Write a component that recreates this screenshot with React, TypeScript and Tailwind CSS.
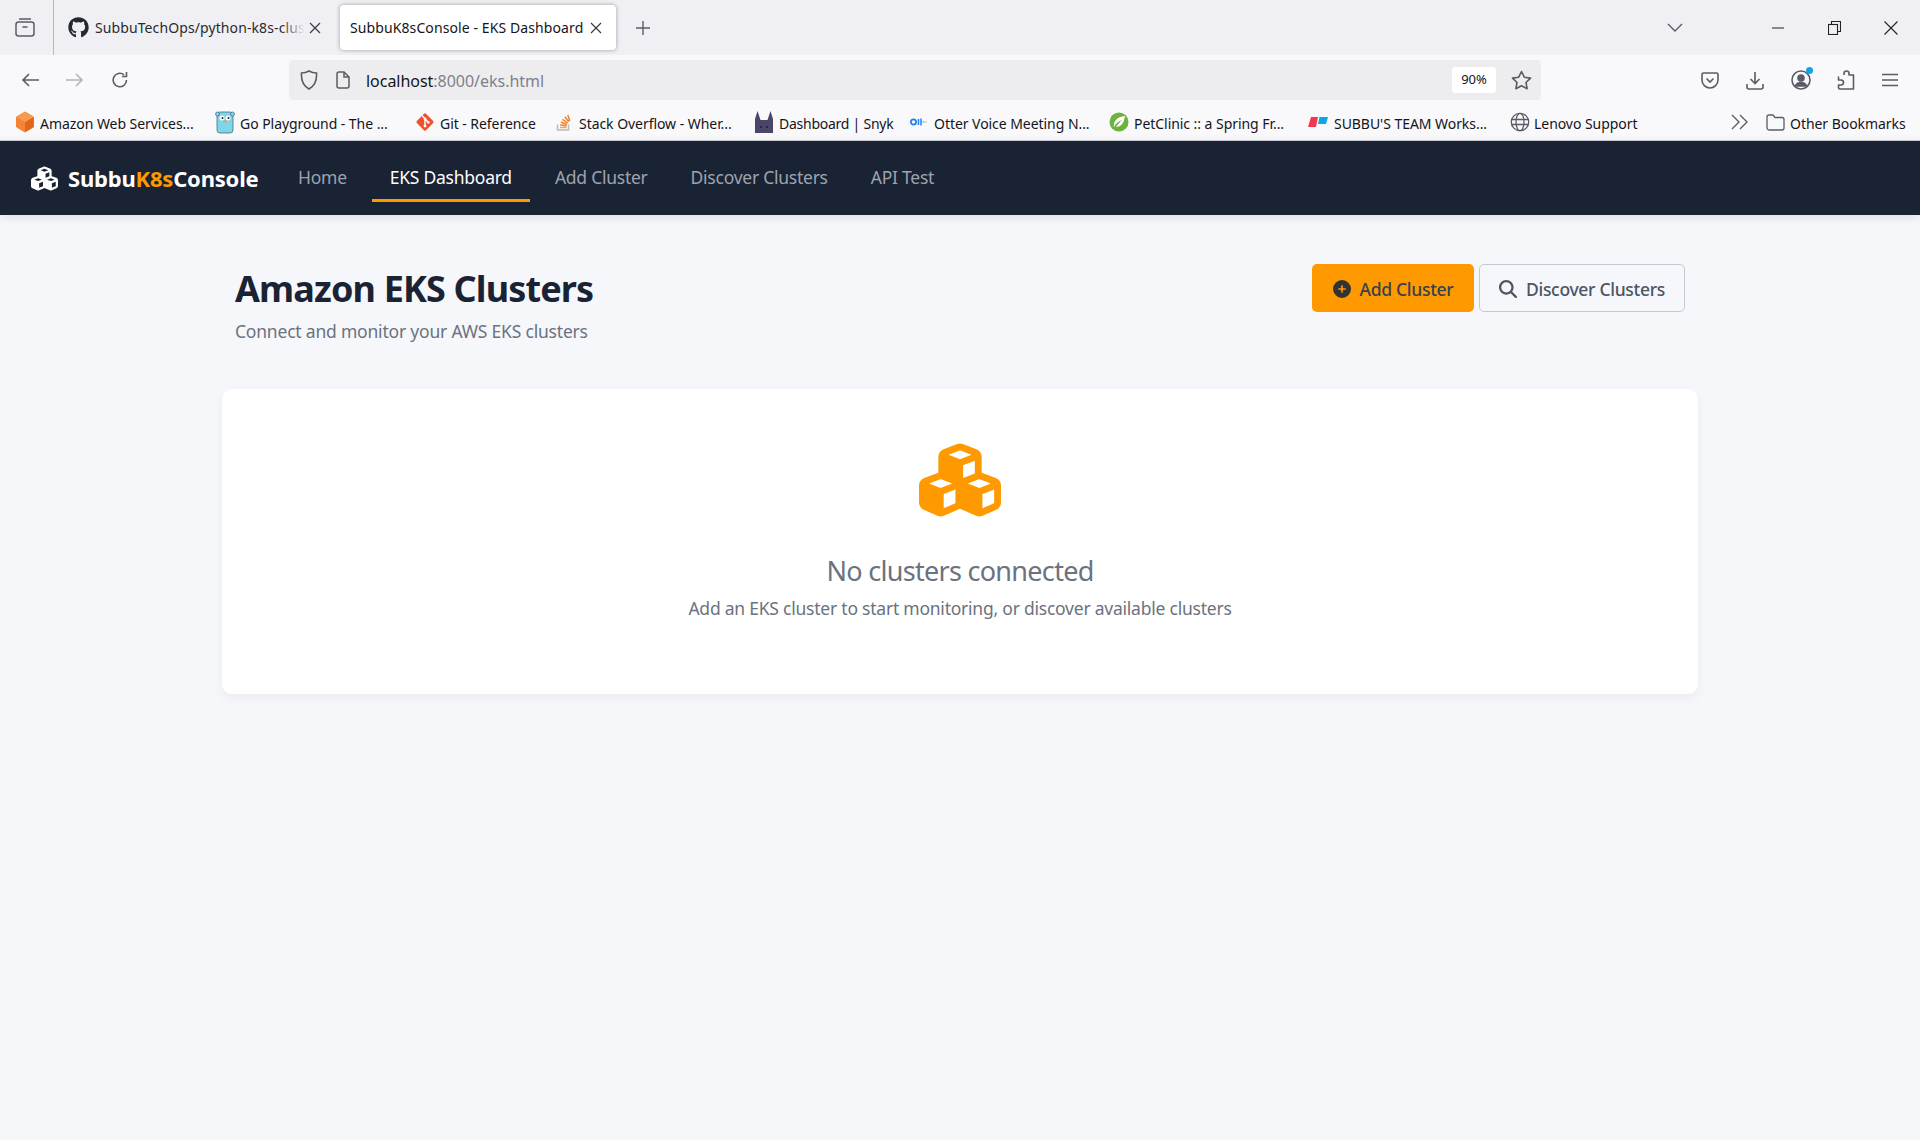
import { FaGithub } from 'react-icons/fa';
import { FaCirclePlus, FaCubes, FaMagnifyingGlass } from 'react-icons/fa6';

const font = "font-['Noto_Sans','Open_Sans',sans-serif]";

const AmazonIcon = () => (
  <svg width="20" height="22" viewBox="0 0 20 22">
    <path d="M10 1l8.500 5v10L10 21l-8.500-5V6z" fill="#f58536" stroke="#f58536" strokeLinejoin="round" />
    <path d="M10 11l8.500-5v10L10 21z" fill="#e0661f" />
    <path d="M10 1l8.500 5L10 11 1.500 6z" fill="#fa9a4c" />
  </svg>
);

const GoIcon = () => (
  <svg width="20" height="24" viewBox="0 0 20 24">
    <rect x="2" y="2" width="16" height="21" rx="3" fill="#7fd5ea" stroke="#4a6b78" strokeWidth="0.8" />
    <circle cx="2.500" cy="4" r="2" fill="#7fd5ea" stroke="#4a6b78" strokeWidth="0.7" />
    <circle cx="17.500" cy="4" r="2" fill="#7fd5ea" stroke="#4a6b78" strokeWidth="0.7" />
    <circle cx="7" cy="8" r="2.500" fill="#fff" />
    <circle cx="13" cy="8" r="2.500" fill="#fff" />
    <circle cx="7.500" cy="8" r="1" fill="#222" />
    <circle cx="13.500" cy="8" r="1" fill="#222" />
    <ellipse cx="10" cy="11.500" rx="2" ry="1.300" fill="#d9a27a" />
  </svg>
);

const GitIcon = () => (
  <svg width="20" height="20" viewBox="0 0 20 20">
    <rect x="3.500" y="3.500" width="13" height="13" rx="1.500" transform="rotate(45 10 10)" fill="#f0502e" />
    <path d="M7 3.500l6 6.500M10 7v7" stroke="#fff" strokeWidth="1.400" fill="none" />
    <circle cx="10" cy="7" r="1.400" fill="#fff" />
    <circle cx="10" cy="14" r="1.400" fill="#fff" />
    <circle cx="13.300" cy="10.300" r="1.400" fill="#fff" />
  </svg>
);

const StackIcon = () => (
  <svg width="18" height="20" viewBox="0 0 18 20" fill="none">
    <path d="M2.500 12.500V18h11v-5.500" stroke="#bcbbbb" strokeWidth="1.500" />
    <path d="M5 15.500h6.500" stroke="#f2a45c" strokeWidth="1.500" />
    <path d="M5.200 12.800l6.300 1.200M6 10l6 2.500M7.500 7.300l5.200 3.700M9.800 4.800l4 5M12.800 3l2 6" stroke="#f48024" strokeWidth="1.500" />
  </svg>
);

const SnykIcon = () => (
  <svg width="20" height="24" viewBox="0 0 20 24">
    <path d="M1 23V9l2.500-8 3 9h7l3-9L19 9v14z" fill="#4b4668" />
    <circle cx="7" cy="17" r="1" fill="#221f33" />
    <circle cx="13" cy="17" r="1" fill="#221f33" />
  </svg>
);

const OtterIcon = () => (
  <svg width="18" height="12" viewBox="0 0 18 12" fill="none">
    <circle cx="3.500" cy="6" r="2.600" stroke="#1d82f5" strokeWidth="1.800" />
    <path d="M8.500 3v6M11 2.500v7" stroke="#1d82f5" strokeWidth="1.500" />
    <path d="M13.500 5v2M16 5.500v1" stroke="#7db8f7" strokeWidth="1.500" />
  </svg>
);

const SpringIcon = () => (
  <svg width="20" height="22" viewBox="0 0 20 22">
    <circle cx="10" cy="11" r="9.500" fill="#6cb33e" />
    <path d="M5 16c-1-6 3-10 11-11-1 7-4 11-9 11 2-3 4-5 6-7-3 1-6 3-8 7z" fill="#fff" />
  </svg>
);

const TeamIcon = () => (
  <svg width="20" height="10" viewBox="0 0 20 10">
    <path d="M3 0h7L8 10H0z" fill="#f0384f" />
    <path d="M11.500 0H20l-2 7h-8z" fill="#0ea5e9" />
  </svg>
);

const GlobeIcon = () => (
  <svg width="20" height="20" viewBox="0 0 20 20" fill="none" stroke="#5b5b66" strokeWidth="1.300">
    <circle cx="10" cy="10" r="8.700" />
    <ellipse cx="10" cy="10" rx="4" ry="8.700" />
    <path d="M1.500 7.500h17M1.500 12.500h17" />
  </svg>
);

const bookmarks = [
  { icon: <AmazonIcon />, label: 'Amazon Web Services...', box: 'w-[215px] pl-[15px] gap-[5px]' },
  { icon: <GoIcon />, label: 'Go Playground - The ...', box: 'w-[200px] gap-[5px]' },
  { icon: <GitIcon />, label: 'Git - Reference', box: 'w-[140px] gap-[5px]' },
  { icon: <StackIcon />, label: 'Stack Overflow - Wher...', box: 'w-[199px] gap-[6px]' },
  { icon: <SnykIcon />, label: 'Dashboard | Snyk', box: 'w-[156px] gap-[5px] tracking-[-0.25px]' },
  { icon: <OtterIcon />, label: 'Otter Voice Meeting N...', box: 'w-[199px] gap-[6px]' },
  { icon: <SpringIcon />, label: 'PetClinic :: a Spring Fr...', box: 'w-[199px] gap-[5px]' },
  { icon: <TeamIcon />, label: "SUBBU'S TEAM Works...", box: 'w-[202px] gap-[6px]' },
  { icon: <GlobeIcon />, label: 'Lenovo Support', box: 'w-[130px] gap-[4px]' },
];

const navLinks = [
  { label: 'Home', active: false },
  { label: 'EKS Dashboard', active: true },
  { label: 'Add Cluster', active: false },
  { label: 'Discover Clusters', active: false },
  { label: 'API Test', active: false },
];

const TabStrip = () => (
  <div className="flex h-[55px] items-center bg-[#f0f0f4] text-[#15141a]">
    <div className="flex h-full w-[54px] shrink-0 items-center border-r border-[#b8b8bd] pl-[15px]">
      <svg width="20" height="20" viewBox="0 0 20 20" fill="none" stroke="#5b5b66" strokeWidth="1.500">
        <rect x="1" y="4" width="18" height="14" rx="2.500" />
        <path d="M4 1h12M7.500 9h5" />
      </svg>
    </div>
    <div className="ml-[14px] flex w-[272px] shrink-0 items-center">
      <FaGithub className="shrink-0 text-[21px] text-[#24292e]" />
      <span className="relative ml-[6px] w-[210px] overflow-hidden whitespace-nowrap text-[14px] tracking-[0.1px] text-[#2a2a2e]">
        SubbuTechOps/python-k8s-cluster
        <span className="absolute inset-y-0 right-0 w-[24px] bg-gradient-to-r from-transparent to-[#f0f0f4]" />
      </span>
      <svg className="ml-[4px] shrink-0" width="12" height="12" viewBox="0 0 12 12" stroke="#3a3a40" strokeWidth="1.200"><path d="M1 1l10 10M11 1L1 11" /></svg>
    </div>
    <div className="flex h-[45px] w-[276px] shrink-0 items-center rounded-[4px] bg-white pl-[10px] shadow-[0_0_4px_rgba(0,0,0,0.35)]">
      <span className="w-[240px] whitespace-nowrap text-[14px] tracking-[0.1px]">SubbuK8sConsole - EKS Dashboard</span>
      <svg className="shrink-0" width="12" height="12" viewBox="0 0 12 12" stroke="#3a3a40" strokeWidth="1.200"><path d="M1 1l10 10M11 1L1 11" /></svg>
    </div>
    <svg className="ml-[19px] shrink-0" width="16" height="16" viewBox="0 0 16 16" stroke="#5b5b66" strokeWidth="1.400"><path d="M8 1v14M1 8h14" /></svg>
    <div className="flex-1" />
    <svg className="mr-[89px] shrink-0" width="16" height="10" viewBox="0 0 16 10" fill="none" stroke="#5b5b66" strokeWidth="1.400"><path d="M1 1l7 7 7-7" /></svg>
    <svg className="mr-[44px] shrink-0" width="12" height="2" viewBox="0 0 12 2" stroke="#222"><path d="M0 1h12" /></svg>
    <svg className="mr-[43px] shrink-0" width="13" height="14" viewBox="0 0 13 14" fill="none" stroke="#222" strokeWidth="1.100"><rect x="0.500" y="3.500" width="9" height="10" /><path d="M3.500 3.500v-3h9v10h-3" /></svg>
    <svg className="mr-[22px] shrink-0" width="14" height="14" viewBox="0 0 14 14" stroke="#222" strokeWidth="1.100"><path d="M0.500 0.500l13 13M13.500 0.500l-13 13" /></svg>
  </div>
);

const Toolbar = () => (
  <div className="flex h-[45px] items-center bg-[#f9f9fb]">
    <div className="mt-[5px] flex w-[289px] shrink-0 items-center pl-[21px]">
      <svg width="18" height="16" viewBox="0 0 18 16" fill="none" stroke="#5b5b66" strokeWidth="1.600"><path d="M18 8H2M8 2L2 8l6 6" /></svg>
      <svg className="ml-[27px]" width="18" height="16" viewBox="0 0 18 16" fill="none" stroke="#b3b3b8" strokeWidth="1.600"><path d="M0 8h16M10 2l6 6-6 6" /></svg>
      <svg className="ml-[27px]" width="18" height="18" viewBox="0 0 18 18" fill="none" stroke="#5b5b66" strokeWidth="1.600"><path d="M15.500 9A6.700 6.700 0 1 1 13 3.800" /><path d="M15.500 1v4.500H11" /></svg>
    </div>
    <div className="mt-[5px] flex h-[40px] w-[1252px] shrink-0 items-center rounded-[4px] bg-[#ededf0] pl-[11px]">
      <svg width="18" height="20" viewBox="0 0 18 20" fill="none" stroke="#5b5b66" strokeWidth="1.600"><path d="M9 1c2.500 1.500 5 2 7.500 2 .5 7-2 13-7.500 16C3.500 16 1 10 1.500 3 4 3 6.500 2.500 9 1z" /></svg>
      <svg className="ml-[18px]" width="14" height="18" viewBox="0 0 14 18" fill="none" stroke="#5b5b66" strokeWidth="1.500"><path d="M1 3a2 2 0 0 1 2-2h5l5 5v9a2 2 0 0 1-2 2H3a2 2 0 0 1-2-2z" /><path d="M8 1v5h5" /></svg>
      <span className="ml-[16px] pt-[2px] text-[16px] tracking-[-0.03px] text-[#15141a]">localhost<span className="text-[#80808a]">:8000/eks.html</span></span>
      <div className="flex-1" />
      <div className="flex h-[26px] w-[44px] items-center justify-center rounded-[3px] bg-white text-[13px] text-[#15141a]">90%</div>
      <svg className="ml-[15px] mr-[9px]" width="21" height="20" viewBox="0 0 21 20" fill="none" stroke="#5b5b66" strokeWidth="1.600" strokeLinejoin="round"><path d="M10.500 1.500l2.800 5.700 6.200.9-4.500 4.400 1.100 6.200-5.600-3-5.600 3 1.100-6.200L1.500 8.100l6.200-.9z" /></svg>
    </div>
    <div className="relative mt-[5px] flex flex-1 items-center pl-[160px]">
      <svg width="18" height="18" viewBox="0 0 18 18" fill="none" stroke="#5b5b66" strokeWidth="1.600"><path d="M1 3.500A1.500 1.500 0 0 1 2.500 2h13A1.500 1.500 0 0 1 17 3.500V9a8 8 0 0 1-16 0z" /><path d="M5.500 7.500L9 11l3.500-3.500" /></svg>
      <svg className="ml-[27px]" width="18" height="19" viewBox="0 0 18 19" fill="none" stroke="#5b5b66" strokeWidth="1.600"><path d="M9 1v11M4.500 8L9 12.500 13.500 8M1 13v3a2 2 0 0 0 2 2h12a2 2 0 0 0 2-2v-3" /></svg>
      <div className="relative ml-[27px]">
        <svg width="20" height="20" viewBox="0 0 20 20" fill="none" stroke="#5b5b66" strokeWidth="1.600"><circle cx="10" cy="10" r="9" /><circle cx="10" cy="8" r="3" fill="#5b5b66" /><path d="M4.500 16c1-3 3-3.500 5.500-3.500s4.500.5 5.500 3.500z" fill="#5b5b66" /></svg>
        <span className="absolute -right-[2px] -top-[3px] h-[7px] w-[7px] rounded-full bg-[#0ea5e9]" />
      </div>
      <svg className="ml-[26px]" width="18" height="20" viewBox="0 0 18 20" fill="none" stroke="#5b5b66" strokeWidth="1.600" strokeLinejoin="round"><path d="M7 5V3.500a2.500 2.500 0 0 1 5 0V5h4.500v14H3a1.500 1.500 0 0 1-1.500-1.500V15H4a2 2 0 0 0 0-5H1.500V6.500" /></svg>
      <svg className="ml-[27px]" width="16" height="14" viewBox="0 0 16 14" stroke="#5b5b66" strokeWidth="1.600"><path d="M0 1.500h16M0 7h16M0 12.500h16" /></svg>
    </div>
  </div>
);

const BookmarksBar = () => (
  <div className="flex h-[41px] items-center border-b border-[#cfcfd8] bg-[#f9f9fb] pt-[4px] text-[14px] tracking-[-0.05px] text-[#15141a]">
    {bookmarks.map((b) => (
      <div key={b.label} className={`flex shrink-0 items-center whitespace-nowrap ${b.box}`}>
        {b.icon}
        <span className="pt-[2px]">{b.label}</span>
      </div>
    ))}
    <svg className="ml-[91px] shrink-0" width="17" height="16" viewBox="0 0 17 16" fill="none" stroke="#5b5b66" strokeWidth="1.400"><path d="M1 1l7 7-7 7M9 1l7 7-7 7" /></svg>
    <svg className="ml-[18px] shrink-0" width="19" height="17" viewBox="0 0 19 17" fill="none" stroke="#5b5b66" strokeWidth="1.300"><path d="M1 3a2 2 0 0 1 2-2h4l2 2.500h7a2 2 0 0 1 2 2V14a2 2 0 0 1-2 2H3a2 2 0 0 1-2-2z" /></svg>
    <span className="ml-[5px] whitespace-nowrap pt-[2px]">Other Bookmarks</span>
  </div>
);

const NavBar = () => (
  <nav className="relative flex h-[74px] items-center bg-[#1a2333] pl-[31px] shadow-[0_2px_10px_rgba(0,0,0,0.1)]">
    <FaCubes className="shrink-0 text-[27px] text-white" />
    <span className="ml-[10px] w-[212px] shrink-0 text-[22px] font-bold tracking-[-0.2px] text-white">
      Subbu<span className="text-[#ff9900]">K8s</span>Console
    </span>
    <div className="flex h-full gap-[7px]">
      {navLinks.map((link) => (
        <div
          key={link.label}
          className={`mb-[13px] mt-[11px] flex items-center border-b-[3px] px-[18px] pt-[4px] text-[17.500px] tracking-[-0.25px] ${
            link.active ? 'border-[#ff9900] text-white' : 'border-transparent text-[#9ca3af]'
          }`}
        >
          {link.label}
        </div>
      ))}
    </div>
  </nav>
);

export default function App() {
  return (
    <div className={`h-[1140px] overflow-hidden bg-[#f5f7fb] ${font}`}>
      <TabStrip />
      <Toolbar />
      <BookmarksBar />
      <NavBar />
      <main className="mx-auto w-[1476px] pt-[49px]">
        <div className="flex items-start justify-between px-[13px]">
          <div>
            <h1 className="pt-[2px] text-[36px] font-bold leading-[46px] tracking-[-0.85px] text-[#1a2333]">Amazon EKS Clusters</h1>
            <p className="mt-[7px] text-[17.500px] leading-[24px] tracking-[-0.2px] text-[#6b7280]">Connect and monitor your AWS EKS clusters</p>
          </div>
          <div className="flex gap-[5px]">
            <button className="flex h-[48px] w-[162px] items-center justify-center gap-[9px] rounded-[5px] bg-[#ff9900] pt-[2px] text-[17.500px] font-medium tracking-[-0.3px] text-[#374151]">
              <FaCirclePlus className="text-[18px] text-[#333]" />
              Add Cluster
            </button>
            <button className="flex h-[48px] w-[206px] items-center justify-center gap-[9px] rounded-[5px] border border-[#c8c9ce] pt-[2px] text-[17.500px] font-medium tracking-[-0.3px] text-[#4b5563]">
              <FaMagnifyingGlass className="text-[18px]" />
              Discover Clusters
            </button>
          </div>
        </div>
        <section className="mt-[46px] flex h-[305px] flex-col items-center rounded-[10px] bg-white pt-[50px] shadow-[0_4px_12px_rgba(0,0,0,0.05)]">
          <FaCubes className="text-[82px] text-[#ff9900]" />
          <h2 className="mt-[32px] text-[27px] leading-[36px] tracking-[-0.7px] text-[#6b7280]">No clusters connected</h2>
          <p className="mt-[7px] text-[17.500px] leading-[24px] tracking-[-0.23px] text-[#6b7280]">Add an EKS cluster to start monitoring, or discover available clusters</p>
        </section>
      </main>
    </div>
  );
}
